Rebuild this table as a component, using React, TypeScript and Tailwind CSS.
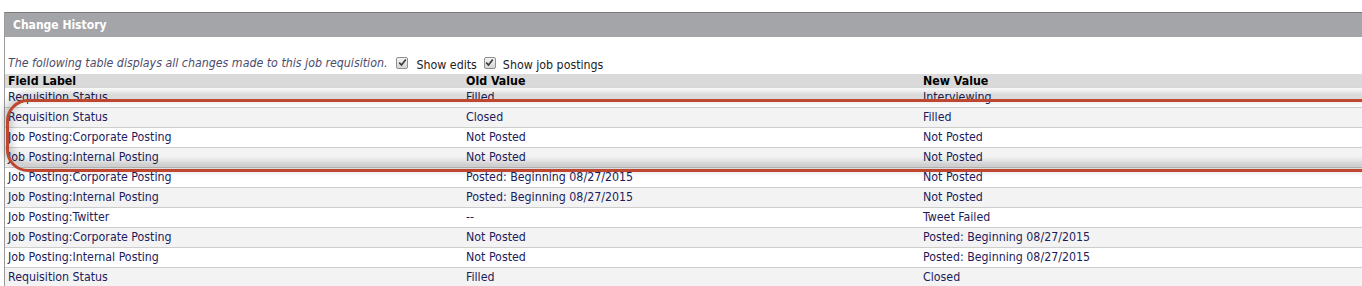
const rows: [string, string, string][] = [
  ["Requisition Status", "Filled", "Interviewing"],
  ["Requisition Status", "Closed", "Filled"],
  ["Job Posting:Corporate Posting", "Not Posted", "Not Posted"],
  ["Job Posting:Internal Posting", "Not Posted", "Not Posted"],
  ["Job Posting:Corporate Posting", "Posted: Beginning 08/27/2015", "Not Posted"],
  ["Job Posting:Internal Posting", "Posted: Beginning 08/27/2015", "Not Posted"],
  ["Job Posting:Twitter", "--", "Tweet Failed"],
  ["Job Posting:Corporate Posting", "Not Posted", "Posted: Beginning 08/27/2015"],
  ["Job Posting:Internal Posting", "Not Posted", "Posted: Beginning 08/27/2015"],
  ["Requisition Status", "Filled", "Closed"],
];

function Check() {
  return (
    <span className="inline-flex h-[12px] w-[12px] items-center justify-center rounded-[2px] border border-[#8e8f8f] bg-gradient-to-b from-[#f4f4f4] to-[#d6d6d6]">
      <svg width="9" height="9" viewBox="0 0 9 9">
        <path d="M1.2 4.6 L3.5 7 L7.8 1.6" fill="none" stroke="#3a3a3a" strokeWidth="1.6" />
      </svg>
    </span>
  );
}

export default function App() {
  return (
    <div className="relative h-[286px] w-[1362px] overflow-hidden bg-white pt-[12px] pl-[4px] font-['DejaVu_Sans_Condensed','DejaVu_Sans',sans-serif] text-[12.3px] leading-none">
      <div className="border-l border-[#9a9a9a]">
        <div className="flex h-[25px] items-center border-t border-[#7a7a7a] bg-[#a4a5a9] pl-[8px] text-[12px] font-bold text-white">
          Change History
        </div>

        <div className="flex h-[37px] items-end pb-[5px] pl-[3px]">
          <span className="italic text-[#4c4c6c]">
            The following table displays all changes made to this job requisition.
          </span>
          <span className="ml-[9px] flex items-center gap-[8px] text-[#222]">
            <Check />
            <span className="relative top-[2px]">Show edits</span>
          </span>
          <span className="ml-[7px] flex items-center gap-[7px] text-[#222]">
            <Check />
            <span className="relative top-[2px]">Show job postings</span>
          </span>
        </div>

        <div className="grid h-[14px] grid-cols-[458px_457px_1fr] items-center bg-[#dadada] font-bold text-black">
          <div className="pl-[3px]">Field Label</div>
          <div className="pl-[3px]">Old Value</div>
          <div className="pl-[3px]">New Value</div>
        </div>

        {rows.map((r, i) => (
          <div
            key={i}
            className={`grid h-[20px] grid-cols-[458px_457px_1fr] items-center border-b border-[#cdcdcd] text-[#1c1c5c] ${
              i % 2 === 1 ? "bg-[#f3f3f3]" : "bg-white"
            }`}
          >
            <div className="pl-[3px]">{r[0]}</div>
            <div className="pl-[3px]">{r[1]}</div>
            <div className="pl-[3px]">{r[2]}</div>
          </div>
        ))}
      </div>

      <div className="pointer-events-none absolute left-[6px] top-[99px] h-[73px] w-[1400px] rounded-[22px] border-[3px] border-[#c0472f] [filter:drop-shadow(0_-4px_4px_rgba(0,0,0,0.55))]" />
    </div>
  );
}
